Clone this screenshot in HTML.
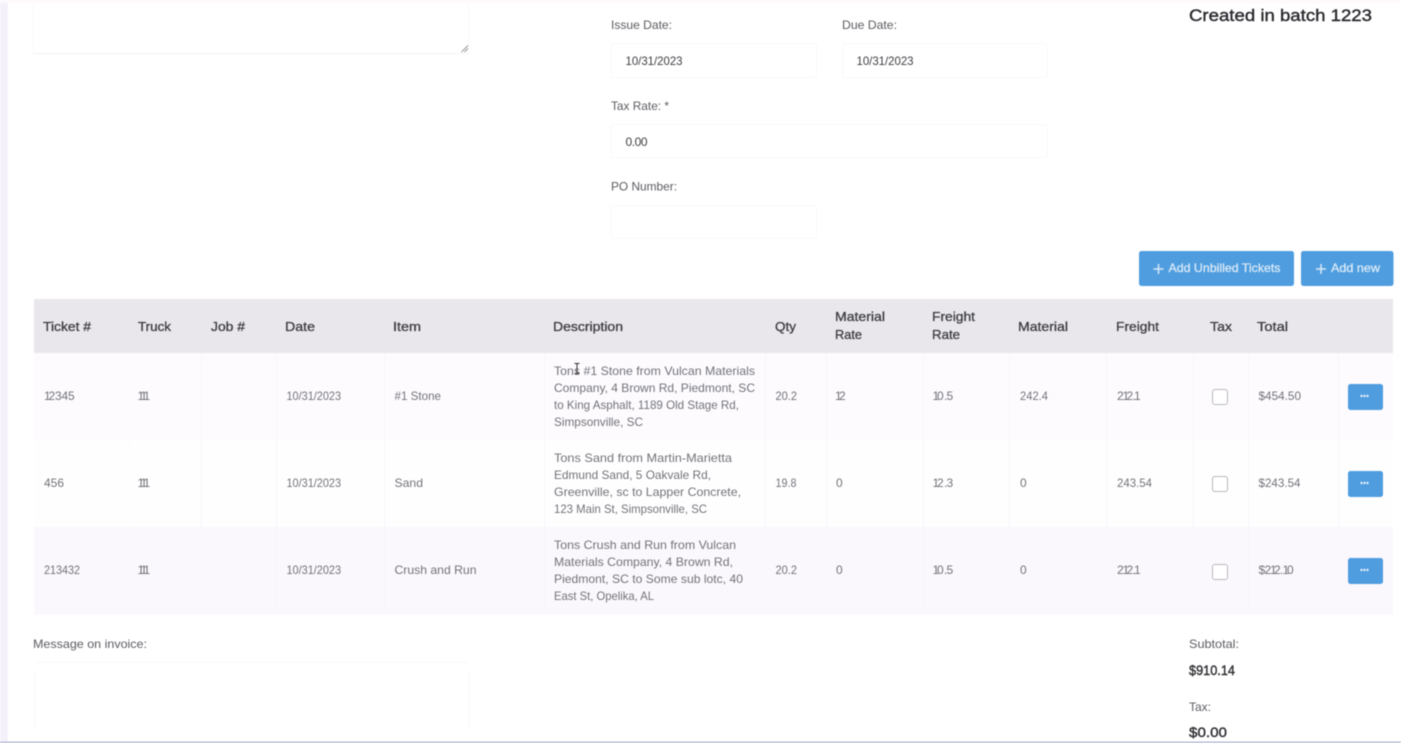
<!DOCTYPE html>
<html lang="en"><head><meta charset="utf-8"><title>Invoice</title>
<style>
html,body{margin:0;padding:0;background:#fff;width:1401px;height:743px;overflow:hidden}
svg{display:block;filter:blur(.45px)}
text{font-family:"Liberation Sans",sans-serif;font-size:12px;fill:#6d6d73}
.h text{fill:#3c3c42;font-size:13px;stroke:#3c3c42;stroke-width:.3}
.l{fill:#5c5c62}
.d{fill:#727278}
.b{fill:#d5e7f7;font-size:12px;stroke:#e3f0fb;stroke-width:.25}
.i{fill:#3f3f44;font-size:12px}
.t{font-size:14px;fill:#2f2f34;stroke:#2f2f34;stroke-width:.4}
</style></head><body>
<svg width="1401" height="743" viewBox="0 0 1401 743" xmlns="http://www.w3.org/2000/svg">
<rect width="1401" height="743" fill="#fff"/>
<rect x="0" y="0" width="8" height="743" fill="#f5f1fb"/>
<rect x="0" y="0" width="1401" height="3" fill="#fdf9fc"/>

<!-- top textarea -->
<path d="M33.500 4V53.500H468.500V4" fill="#fff" stroke="#f8f8fa"/>
<path d="M33.500 53.500H468.500" fill="none" stroke="#f4f4f6"/>
<path d="M461.500 52L468 45.500M464.500 52L468 48.500" stroke="#777" stroke-width=".8" fill="none"/>

<!-- form -->
<text class="l" x="611" y="29" textLength="61" lengthAdjust="spacingAndGlyphs">Issue Date:</text>
<text class="l" x="842" y="29" textLength="55" lengthAdjust="spacingAndGlyphs">Due Date:</text>
<rect x="611.500" y="43.500" width="205" height="34" rx="2" fill="#fff" stroke="#f9f9fa"/>
<rect x="842.500" y="43.500" width="205" height="34" rx="2" fill="#fff" stroke="#f9f9fa"/>
<text class="i" x="625.500" y="65" textLength="57" lengthAdjust="spacingAndGlyphs">10/31/2023</text>
<text class="i" x="856.500" y="65" textLength="57" lengthAdjust="spacingAndGlyphs">10/31/2023</text>
<text class="l" x="611" y="110" textLength="58" lengthAdjust="spacingAndGlyphs">Tax Rate: *</text>
<rect x="611.500" y="124.500" width="436" height="33" rx="2" fill="#fff" stroke="#f9f9fa"/>
<text class="i" x="625.500" y="146" textLength="22" lengthAdjust="spacing">0.00</text>
<text class="l" x="611" y="190.500" textLength="66" lengthAdjust="spacingAndGlyphs">PO Number:</text>
<rect x="611.500" y="205.500" width="205" height="33" rx="2" fill="#fff" stroke="#f9f9fa"/>

<text x="1189" y="21" textLength="183" lengthAdjust="spacingAndGlyphs" style="font-size:17px;fill:#2a2a2f;stroke:#2a2a2f;stroke-width:.4">Created in batch 1223</text>

<!-- buttons -->
<rect x="1139" y="251" width="155" height="35" rx="2.500" fill="#4f9ddf"/>
<rect x="1301" y="251" width="92.500" height="35" rx="2.500" fill="#4f9ddf"/>
<path d="M1153.500 269H1163.500M1158.500 264V274M1316 269H1326M1321 264V274" stroke="#d8e9f8" stroke-width="1.500" fill="none"/>
<text class="b" x="1168.500" y="272" textLength="112" lengthAdjust="spacingAndGlyphs">Add Unbilled Tickets</text>
<text class="b" x="1331" y="272" textLength="49" lengthAdjust="spacingAndGlyphs">Add new</text>

<!-- table -->
<rect x="34" y="299" width="1359" height="54" fill="#e9e7eb"/>
<rect x="34" y="353" width="1359" height="87" fill="#fdfbfe"/>
<rect x="34" y="440" width="1359" height="87" fill="#fffeff"/>
<rect x="34" y="527" width="1359" height="88" fill="#fbf8fd"/>
<path d="M201.500 354V614M276.500 354V614M384.500 354V614M544.500 354V614M765.500 354V614M826.500 354V614M923.500 354V614M1009.500 354V614M1106.500 354V614M1193.500 354V614M1248.500 354V614M1338.500 354V614" stroke="#f6f4f8" fill="none"/>
<path d="M129.500 354V614" stroke="#fbfafc" fill="none"/>

<g class="h">
<text x="43" y="331" textLength="48" lengthAdjust="spacingAndGlyphs">Ticket #</text>
<text x="138" y="331" textLength="33" lengthAdjust="spacingAndGlyphs">Truck</text>
<text x="211" y="331" textLength="34" lengthAdjust="spacingAndGlyphs">Job #</text>
<text x="285" y="331" textLength="30" lengthAdjust="spacingAndGlyphs">Date</text>
<text x="393" y="331" textLength="28" lengthAdjust="spacingAndGlyphs">Item</text>
<text x="553" y="331" textLength="70" lengthAdjust="spacingAndGlyphs">Description</text>
<text x="775" y="331" textLength="21" lengthAdjust="spacingAndGlyphs">Qty</text>
<text x="835" y="321" textLength="50" lengthAdjust="spacingAndGlyphs">Material</text>
<text x="835" y="339" textLength="27" lengthAdjust="spacingAndGlyphs">Rate</text>
<text x="932" y="321" textLength="43" lengthAdjust="spacingAndGlyphs">Freight</text>
<text x="932" y="339" textLength="28" lengthAdjust="spacingAndGlyphs">Rate</text>
<text x="1018" y="331" textLength="50" lengthAdjust="spacingAndGlyphs">Material</text>
<text x="1116" y="331" textLength="43" lengthAdjust="spacingAndGlyphs">Freight</text>
<text x="1210" y="331" textLength="22" lengthAdjust="spacingAndGlyphs">Tax</text>
<text x="1257" y="331" textLength="31" lengthAdjust="spacingAndGlyphs">Total</text>
</g>

<!-- row 1 -->
<text class="d" x="44 48.500 55 61.500 68" y="400">12345</text>
<text class="d" x="137.500 140.500 143.500" y="400">111</text>
<text class="d" x="286.500" y="400" textLength="54.500" lengthAdjust="spacingAndGlyphs">10/31/2023</text>
<text class="d" x="394.500" y="400" textLength="46.500" lengthAdjust="spacingAndGlyphs">#1 Stone</text>
<text class="d" x="554" y="375" textLength="201" lengthAdjust="spacingAndGlyphs">Tons #1 Stone from Vulcan Materials</text>
<text class="d" x="554" y="392" textLength="201" lengthAdjust="spacingAndGlyphs">Company, 4 Brown Rd, Piedmont, SC</text>
<text class="d" x="554" y="409" textLength="185" lengthAdjust="spacingAndGlyphs">to King Asphalt, 1189 Old Stage Rd,</text>
<text class="d" x="554" y="426" textLength="89" lengthAdjust="spacingAndGlyphs">Simpsonville, SC</text>
<text class="d" x="775.500" y="400" textLength="21.500" lengthAdjust="spacingAndGlyphs">20.2</text>
<text class="d" x="835 839" y="400">12</text>
<text class="d" x="932.500 937 944 946.500" y="400">10.5</text>
<text class="d" x="1020" y="400" textLength="28" lengthAdjust="spacingAndGlyphs">242.4</text>
<text class="d" x="1117 1122.500 1126.500 1132.500 1134" y="400">212.1</text>
<text class="d" x="1258.500" y="400" textLength="42.500" lengthAdjust="spacingAndGlyphs">$454.50</text>

<!-- row 2 -->
<text class="d" x="44" y="487" textLength="20" lengthAdjust="spacingAndGlyphs">456</text>
<text class="d" x="137.500 140.500 143.500" y="487">111</text>
<text class="d" x="286.500" y="487" textLength="54.500" lengthAdjust="spacingAndGlyphs">10/31/2023</text>
<text class="d" x="394.500" y="487" textLength="28.500" lengthAdjust="spacingAndGlyphs">Sand</text>
<text class="d" x="554" y="462" textLength="178" lengthAdjust="spacingAndGlyphs">Tons Sand from Martin-Marietta</text>
<text class="d" x="554" y="479" textLength="157" lengthAdjust="spacingAndGlyphs">Edmund Sand, 5 Oakvale Rd,</text>
<text class="d" x="554" y="496" textLength="187" lengthAdjust="spacingAndGlyphs">Greenville, sc to Lapper Concrete,</text>
<text class="d" x="554" y="513" textLength="153" lengthAdjust="spacingAndGlyphs">123 Main St, Simpsonville, SC</text>
<text class="d" x="775.500" y="487" textLength="21" lengthAdjust="spacingAndGlyphs">19.8</text>
<text class="d" x="836" y="487">0</text>
<text class="d" x="932.500 937 944 946.500" y="487">12.3</text>
<text class="d" x="1020" y="487">0</text>
<text class="d" x="1117" y="487" textLength="35" lengthAdjust="spacingAndGlyphs">243.54</text>
<text class="d" x="1258.500" y="487" textLength="42" lengthAdjust="spacingAndGlyphs">$243.54</text>

<!-- row 3 -->
<text class="d" x="44" y="574" textLength="36" lengthAdjust="spacingAndGlyphs">213432</text>
<text class="d" x="137.500 140.500 143.500" y="574">111</text>
<text class="d" x="286.500" y="574" textLength="54.500" lengthAdjust="spacingAndGlyphs">10/31/2023</text>
<text class="d" x="394.500" y="574" textLength="82" lengthAdjust="spacingAndGlyphs">Crush and Run</text>
<text class="d" x="554" y="549" textLength="182" lengthAdjust="spacingAndGlyphs">Tons Crush and Run from Vulcan</text>
<text class="d" x="554" y="566" textLength="179" lengthAdjust="spacingAndGlyphs">Materials Company, 4 Brown Rd,</text>
<text class="d" x="554" y="583" textLength="189" lengthAdjust="spacingAndGlyphs">Piedmont, SC to Some sub lotc, 40</text>
<text class="d" x="554" y="600" textLength="100" lengthAdjust="spacingAndGlyphs">East St, Opelika, AL</text>
<text class="d" x="775.500" y="574" textLength="21.500" lengthAdjust="spacingAndGlyphs">20.2</text>
<text class="d" x="836" y="574">0</text>
<text class="d" x="932.500 937 944 946.500" y="574">10.5</text>
<text class="d" x="1020" y="574">0</text>
<text class="d" x="1117 1122.500 1126.500 1132.500 1134" y="574">212.1</text>
<text class="d" x="1258.500 1264.500 1270 1274 1280 1282.500 1287" y="574">$212.10</text>

<!-- checkboxes -->
<rect x="1212.500" y="389.500" width="15" height="15" rx="2.500" fill="#fff" stroke="#b8b8bd"/>
<rect x="1212.500" y="476.500" width="15" height="15" rx="2.500" fill="#fff" stroke="#b8b8bd"/>
<rect x="1212.500" y="564.500" width="15" height="15" rx="2.500" fill="#fff" stroke="#b8b8bd"/>

<!-- action buttons -->
<g fill="#4f9ddf">
<rect x="1348" y="384" width="35" height="26" rx="2.500"/>
<rect x="1348" y="471" width="35" height="26" rx="2.500"/>
<rect x="1348" y="558" width="35" height="26" rx="2.500"/>
</g>
<g fill="#e4f0fb">
<circle cx="1361.500" cy="396" r="1.200"/><circle cx="1364.500" cy="396" r="1.200"/><circle cx="1367.500" cy="396" r="1.200"/>
<circle cx="1361.500" cy="483" r="1.200"/><circle cx="1364.500" cy="483" r="1.200"/><circle cx="1367.500" cy="483" r="1.200"/>
<circle cx="1361.500" cy="570" r="1.200"/><circle cx="1364.500" cy="570" r="1.200"/><circle cx="1367.500" cy="570" r="1.200"/>
</g>

<!-- I-beam cursor -->
<path d="M574.500 363.500H579.500M574.500 373.500H579.500M577 363.500V373.500" stroke="#333" stroke-width="1" fill="none"/>

<!-- footer -->
<text class="l" x="33" y="648" textLength="114" lengthAdjust="spacingAndGlyphs">Message on invoice:</text>
<path d="M34.500 732V668M469.500 732V668" fill="none" stroke="#fafafb"/>
<path d="M36 662.500H468" fill="none" stroke="#f8f8fa"/>
<text class="l" x="1189" y="648" textLength="50" lengthAdjust="spacingAndGlyphs">Subtotal:</text>
<text class="t" x="1189" y="675" textLength="46" lengthAdjust="spacingAndGlyphs">$910.14</text>
<text class="l" x="1189" y="711" textLength="22" lengthAdjust="spacingAndGlyphs">Tax:</text>
<text class="t" x="1189" y="737" textLength="38" lengthAdjust="spacingAndGlyphs">$0.00</text>

<rect x="0" y="741.500" width="1401" height="1.500" fill="#b9bcd9"/>
</svg>
</body></html>
